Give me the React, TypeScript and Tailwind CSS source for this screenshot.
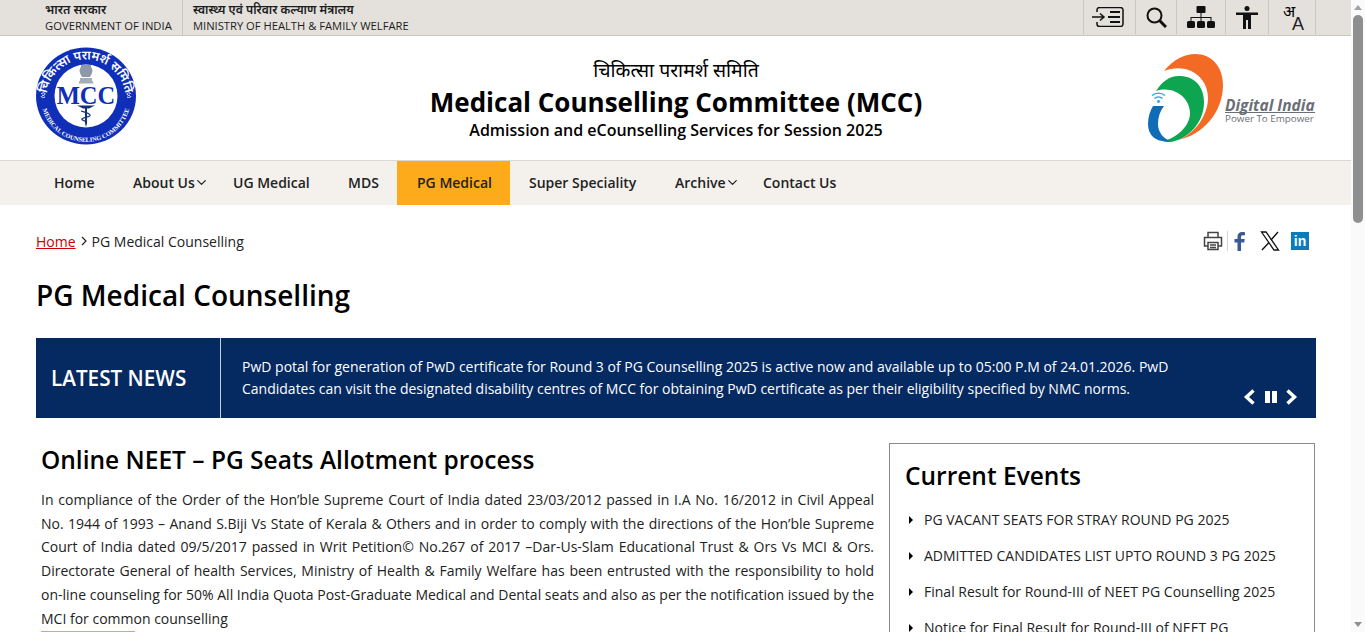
import { ChevronDown } from "lucide-react";

const navItems = [
  { label: "Home", width: "w-[77px]", pad: "pl-[18px]" },
  { label: "About Us", width: "w-[100px]", pad: "pl-[20px]", caret: true },
  { label: "UG Medical", width: "w-[115px]", pad: "pl-[20px]" },
  { label: "MDS", width: "w-[69px]", pad: "pl-[20px]" },
  { label: "PG Medical", width: "w-[113px]", pad: "pl-[20px]", active: true },
  { label: "Super Speciality", width: "w-[145px]", pad: "pl-[19px]" },
  { label: "Archive", width: "w-[89px]", pad: "pl-[20px]", caret: true },
  { label: "Contact Us", width: "w-[110px]", pad: "pl-[19px]" },
];

const events = [
  "PG VACANT SEATS FOR STRAY ROUND PG 2025",
  "ADMITTED CANDIDATES LIST UPTO ROUND 3 PG 2025",
  "Final Result for Round-III of NEET PG Counselling 2025",
  "Notice for Final Result for Round-III of NEET PG",
];

function SkipIcon() {
  return (
    <svg className="mr-[3px]" width="32" height="20" viewBox="0 0 32 20" fill="none" stroke="#111" strokeWidth="1.500">
      <path d="M5 5V3a2.500 2.500 0 0 1 2.500-2.500h21A2.500 2.500 0 0 1 31 3v14a2.500 2.500 0 0 1-2.500 2.500h-21A2.500 2.500 0 0 1 5 17v-2" />
      <path d="M0 10h12M8 6.500l4 3.500-4 3.500" />
      <path d="M18 5h10M16 10h12M18 15h10" strokeWidth="1.800" />
    </svg>
  );
}

function SearchIcon() {
  return (
    <svg width="21" height="21" viewBox="0 0 21 21" fill="none" stroke="#111">
      <circle cx="8.500" cy="8.500" r="7" strokeWidth="2" />
      <path d="M13.500 13.500l6.500 6.500" strokeWidth="3" />
    </svg>
  );
}

function SitemapIcon() {
  return (
    <svg width="28" height="22" viewBox="0 0 28 22" fill="#111">
      <rect x="9.500" y="0" width="9" height="7" rx="1" />
      <path d="M13.500 7h1v4h10v4h-1v-3H14.500v3h-1v-3H4.500v3h-1v-4h10z" />
      <rect x="0" y="15" width="8" height="7" rx="1.500" />
      <rect x="10" y="15" width="8" height="7" rx="1.500" />
      <rect x="20" y="15" width="8" height="7" rx="1.500" />
    </svg>
  );
}

function AccessIcon() {
  return (
    <svg width="22" height="23" viewBox="0 0 22 23" fill="#111">
      <circle cx="11" cy="2.500" r="2.500" />
      <path d="M0 6.500h22V9h-7v14h-3v-9h-2v9H7V9H0z" />
    </svg>
  );
}

function MccLogo() {
  return (
    <svg width="102" height="100" viewBox="0 0 102 100">
      <defs>
        <path id="mcc-top" d="M11.500 52a39.500 39.500 0 0 1 79 0" />
        <path id="mcc-bottom" d="M6 50a45 45 0 0 0 90 0" />
      </defs>
      <ellipse cx="51" cy="49" rx="50" ry="48.500" fill="#0f2fb8" />
      <circle cx="51" cy="49" r="31.500" fill="#fff" />
      <text fontFamily="'Noto Sans', 'Liberation Sans', sans-serif" fontSize="12.500" fontWeight="600" fill="#fff">
        <textPath href="#mcc-top" startOffset="50%" textAnchor="middle">चिकित्सा परामर्श समिति</textPath>
      </text>
      <text fontFamily="'Liberation Serif', serif" fontSize="6.300" fontWeight="700" fill="#fff">
        <textPath href="#mcc-bottom" startOffset="50%" textAnchor="middle">MEDICAL COUNSELING COMMITTEE</textPath>
      </text>
      <g fill="#8e99a8">
        <path d="M46 18h10v2c1 1 2 3 1 6-.7 2-1.700 3-2 4h-8c-.3-1-1.300-2-2-4-1-3 0-5 1-6z" />
        <path d="M45 31h12v2.500c1 1 1.500 2.500 1.500 3H43.500c0-.5.500-2 1.500-3z" opacity="0.800" />
      </g>
      <text x="51" y="57" textAnchor="middle" fontFamily="'Liberation Serif', serif" fontWeight="700" fontSize="24.500" fill="#0f2fb8">MCC</text>
      <path d="M42 58.500h18l-6 3h-2v15l-1 3.500-1-3.500V61.500h-2z" fill="#16307e" />
      <path d="M46 64c3 1 8 2 9 4s-6 2-8 4c-1 1 3 2 5 3" fill="none" stroke="#16307e" strokeWidth="1.200" />
      <path d="M6 47c2-2 4-1 4 0s-2 2-3 1M10 50c-2 1-4 0-4-1" fill="none" stroke="#fff" strokeWidth="1" />
      <path d="M96 47c-2-2-4-1-4 0s2 2 3 1M92 50c2 1 4 0 4-1" fill="none" stroke="#fff" strokeWidth="1" />
    </svg>
  );
}

function DigitalIndiaLogo() {
  return (
    <svg width="168" height="90" viewBox="0 0 168 90">
      <path d="M16 18C26 6 37 1 47 1c17 0 28 13 28 31 0 27-20 50-45 55 17-6 30-25 30-42 0-21-20-36-44-27z" fill="#f36a25" />
      <path d="M8 38c6-9 13-15 23-15 15 0 25 10 25 26 0 21-16 37-33 40-3 0-5 0-8-1 14-3 27-15 27-28 0-15-16-28-34-22z" fill="#0da54f" />
      <path d="M5 53h11c-4 5-6 11-6 18 0 8 5 14 12 17-12 2-22-4-22-17 0-7 2-13 5-18z" fill="#0f6db7" />
      <path d="M4 42.500a10 10 0 0 1 13 0M6.500 45.500a6 6 0 0 1 8 0" fill="none" stroke="#29a4dc" strokeWidth="1.400" />
      <circle cx="10.500" cy="48.500" r="1.400" fill="#29a4dc" />
      <text x="77" y="57.500" fontFamily="'Open Sans', sans-serif" fontStyle="italic" fontWeight="700" fontSize="15.500" fill="#6a6f76">Digital India</text>
      <rect x="77" y="59" width="90" height="1" fill="#6a6f76" />
      <text x="77" y="69" fontFamily="'Open Sans', sans-serif" fontSize="9.800" fill="#6a6f76">Power To Empower</text>
    </svg>
  );
}

function ScrollBar() {
  return (
    <div className="flex h-[632px] w-[14px] flex-col items-center bg-[#fafafa]">
      <div className="mt-[5px] h-0 w-0 border-x-[4px] border-b-[5px] border-x-transparent border-b-[#a3a3a3]" />
      <div className="mt-[5px] h-[208px] w-[10px] rounded-[5px] bg-[#8f8f8f]" />
      <div className="mb-[5px] mt-auto h-0 w-0 border-x-[4px] border-t-[5px] border-x-transparent border-t-[#8f8f8f]" />
    </div>
  );
}

export default function App() {
  return (
    <div className="flex h-[632px] w-[1365px] overflow-hidden bg-white font-['Open_Sans','Noto_Sans',sans-serif] text-black">
      <div className="h-[632px] w-[1351px] overflow-hidden">
        <div className="flex h-[36px] justify-between border-b border-[#c9c7c2] bg-[#e4e1dc] pl-[36px] pr-[35px]">
          <div className="flex">
            <div className="w-[147px] border-r border-[#c9c7c2] pl-[9px] pr-2 text-[11.250px] text-[#1c1c1c]">
              <div className="text-[12.300px] font-semibold leading-[20px]">भारत सरकार</div>
              <div className="-mt-[3px] font-medium leading-[18px]">GOVERNMENT OF INDIA</div>
            </div>
            <div className="pl-[10px] text-[11.200px] text-[#1c1c1c]">
              <div className="text-[12.100px] font-semibold leading-[20px]">स्वास्थ्य एवं परिवार कल्याण मंत्रालय</div>
              <div className="-mt-[3px] font-medium leading-[18px]">MINISTRY OF HEALTH &amp; FAMILY WELFARE</div>
            </div>
          </div>
          <div className="flex h-[34px]">
            <div className="flex w-[53px] items-center justify-center border-x border-[#c9c7c2]"><SkipIcon /></div>
            <div className="flex w-[41px] items-center justify-center border-r border-[#c9c7c2]"><SearchIcon /></div>
            <div className="flex w-[49px] items-center justify-center border-r border-[#c9c7c2]"><SitemapIcon /></div>
            <div className="flex w-[43px] items-center justify-center border-r border-[#c9c7c2]"><AccessIcon /></div>
            <div className="relative w-[47px] border-r border-[#c9c7c2]">
              <span className="absolute left-[14px] top-[1px] text-[16px] leading-[20px]">अ</span>
              <span className="absolute left-[23px] top-[14px] font-['Liberation_Sans',sans-serif] text-[18px] leading-[20px] text-[#222]">A</span>
            </div>
          </div>
        </div>

        <header className="flex h-[124px] items-start justify-between pl-[35px] pr-[35px]">
          <div className="mt-[11px]"><MccLogo /></div>
          <div className="ml-[67px] flex flex-col items-center pt-[20px]">
            <div className="text-[19.400px] leading-[28px]">चिकित्सा परामर्श समिति</div>
            <div className="mt-[1px] text-[26px] font-bold leading-[34px]">Medical Counselling Committee (MCC)</div>
            <div className="mt-[1px] text-[16px] font-semibold leading-[20px]">Admission and eCounselling Services for Session 2025</div>
          </div>
          <div className="mt-[17px]"><DigitalIndiaLogo /></div>
        </header>

        <nav className="flex h-[45px] border-t border-[#dcd9d4] bg-[#f4f1ed] pl-[36px]">
          {navItems.map((item) => (
            <div
              key={item.label}
              className={`flex items-center pb-[2px] text-[14px] font-semibold text-[#222] ${item.width} ${item.pad} ${item.active ? "bg-[#fdab1a]" : ""}`}
            >
              {item.label}
              {item.caret && <ChevronDown className="-ml-px h-[15px] w-[15px]" strokeWidth={2} />}
            </div>
          ))}
        </nav>

        <div className="flex h-[72px] items-center justify-between pl-[36px] pr-[42px]">
          <div className="flex items-center text-[14px] text-[#222]">
            <span className="text-[#cc0000] underline">Home</span>
            <svg className="mx-[4px]" width="8" height="10" viewBox="0 0 8 10" fill="none" stroke="#222" strokeWidth="1.200"><path d="M2 1l4 4-4 4" /></svg>
            PG Medical Counselling
          </div>
          <div className="flex items-center">
            <svg width="20" height="20" viewBox="0 0 20 20" fill="none" stroke="#444" strokeWidth="1.500">
              <path d="M5 6V1.500h10V6M5 15H1.500V6.500h17V15H15" />
              <path d="M5 11.500h10v7H5zM7 14h6M7 16.500h6" />
            </svg>
            <div className="ml-[4px] mr-[6px] h-[20px] w-px bg-[#d5d5d5]" />
            <svg width="12" height="19" viewBox="0 0 12 19" fill="#3b5998">
              <path d="M3.500 19V10.500H.5V7h3V4.500C3.500 1.500 5.500 0 8 0c1.200 0 2.500.1 3 .2v3H9c-1.500 0-2 .7-2 2V7h3.700l-.5 3.500H7V19z" />
            </svg>
            <svg className="ml-[14px]" width="20" height="20" viewBox="0 0 20 20" fill="none" stroke="#111">
              <path d="M1.500 1h4.500l12.500 18H14z" strokeWidth="1.300" />
              <path d="M18 1l-7 8M9 11.500L2 19" strokeWidth="1.400" />
            </svg>
            <div className="ml-[11px] flex h-[18px] w-[18px] items-center justify-center bg-[#0a7cbd] font-['Liberation_Sans',sans-serif] text-[14px] font-bold leading-none text-white">in</div>
          </div>
        </div>

        <h1 className="pl-[36px] text-[28px] font-semibold leading-[36px]">PG Medical Counselling</h1>

        <div className="relative ml-[36px] mt-[25px] flex h-[80px] w-[1280px] bg-[#042a61] text-white">
          <div className="flex w-[185px] shrink-0 items-center border-r border-[#c9cfd9] pl-[15px] pt-[2px] text-[20.700px] font-semibold">LATEST NEWS</div>
          <p className="pl-[21px] pr-[130px] pt-[18px] text-[14px] font-medium leading-[22px]">
            PwD potal for generation of PwD certificate for Round 3 of PG Counselling 2025 is active now and available up to 05:00 P.M of 24.01.2026. PwD Candidates can visit the designated disability centres of MCC for obtaining PwD certificate as per their eligibility specified by NMC norms.
          </p>
          <div className="absolute bottom-[13px] right-[18px] flex items-center gap-[8px]">
            <svg className="mr-px" width="13" height="16" viewBox="0 0 13 16" fill="none" stroke="#fff" strokeWidth="3.500"><path d="M10.500 1.500L3.500 8l7 6.500" /></svg>
            <div className="flex gap-[2px]">
              <div className="h-[12px] w-[5px] bg-white" />
              <div className="h-[12px] w-[5px] bg-white" />
            </div>
            <svg width="13" height="16" viewBox="0 0 13 16" fill="none" stroke="#fff" strokeWidth="3.500"><path d="M2.500 1.500L9.500 8l-7 6.500" /></svg>
          </div>
        </div>

        <div className="flex pl-[41px] pt-[25px]">
          <div className="w-[833px]">
            <h2 className="text-[24.500px] font-semibold leading-[34px]">Online NEET – PG Seats Allotment process</h2>
            <p className="mt-[11px] text-justify text-[14px] leading-[23.700px] text-[#222]">
              In compliance of the Order of the Hon’ble Supreme Court of India dated 23/03/2012 passed in I.A No. 16/2012 in Civil Appeal No. 1944 of 1993 – Anand S.Biji Vs State of Kerala &amp; Others and in order to comply with the directions of the Hon’ble Supreme Court of India dated 09/5/2017 passed in Writ Petition© No.267 of 2017 –Dar-Us-Slam Educational Trust &amp; Ors Vs MCI &amp; Ors. Directorate General of health Services, Ministry of Health &amp; Family Welfare has been entrusted with the responsibility to hold on-line counseling for 50% All India Quota Post-Graduate Medical and Dental seats and also as per the notification issued by the MCI for common counselling
            </p>
            <div className="mt-[1px] h-px w-[94px] bg-[#f0a92e]" />
          </div>
          <aside className="ml-[15px] h-[300px] w-[426px] border border-[#8a8a8a] px-[15px] pt-[14px]">
            <h3 className="text-[24.500px] font-semibold leading-[36px]">Current Events</h3>
            <ul className="mt-[14px] flex flex-col gap-[12px]">
              {events.map((text) => (
                <li key={text} className="flex items-center text-[14px] leading-[24px] text-[#222]">
                  <span className="ml-[4px] mr-[11px] h-0 w-0 border-y-[4px] border-l-[4px] border-y-transparent border-l-black" />
                  {text}
                </li>
              ))}
            </ul>
          </aside>
        </div>
      </div>
      <ScrollBar />
    </div>
  );
}
